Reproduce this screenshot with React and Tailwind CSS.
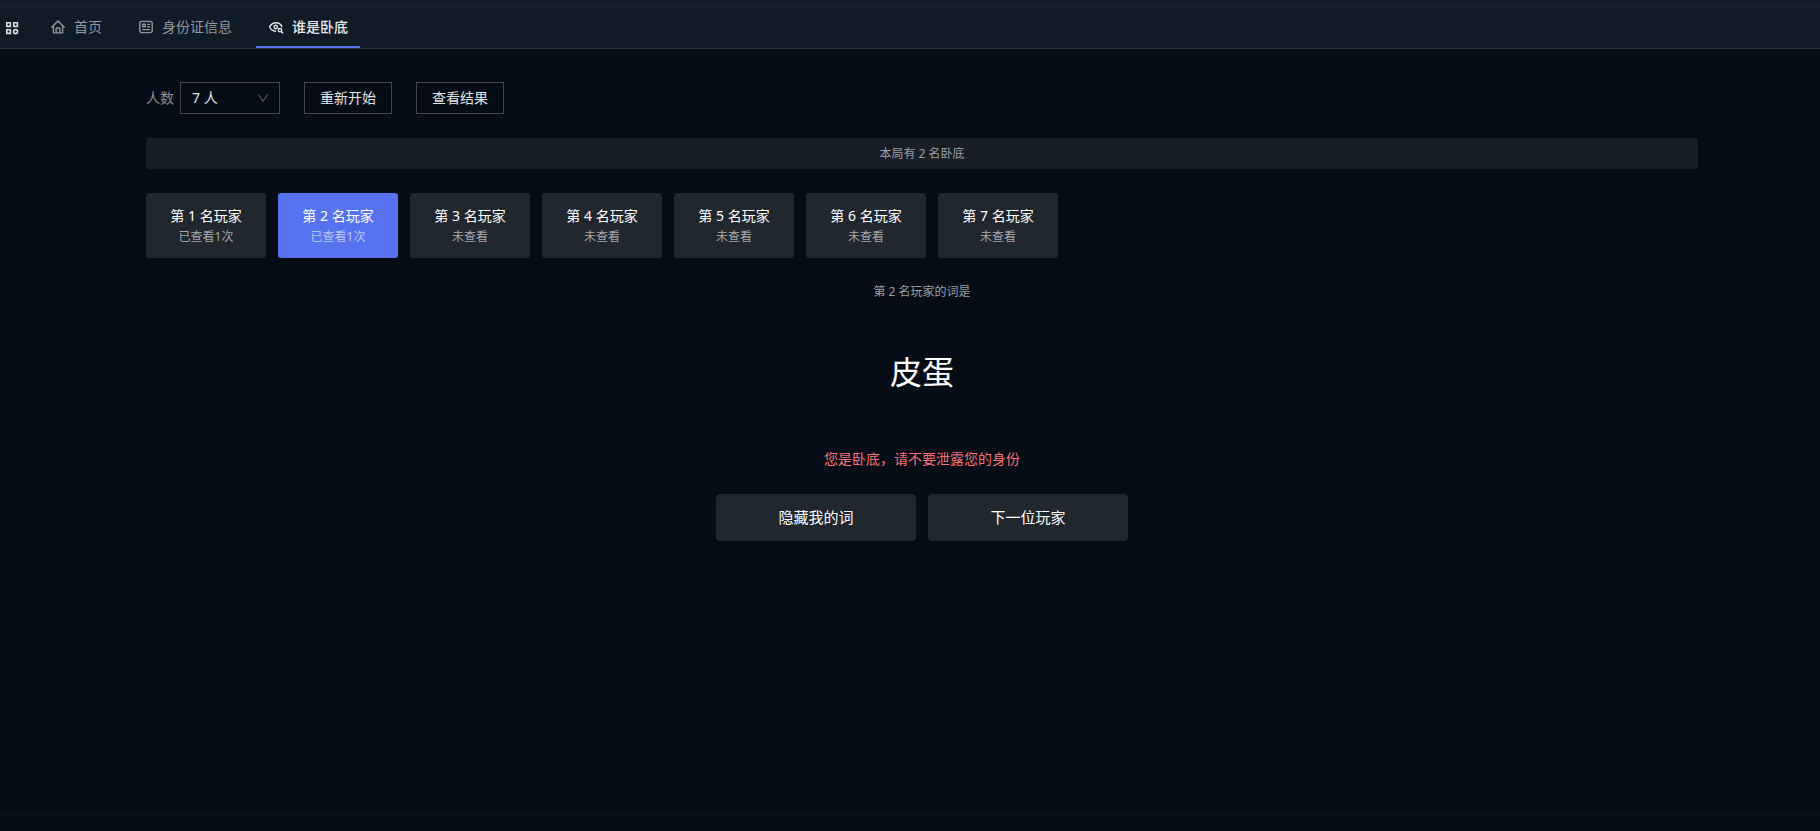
import React, { useState } from 'react';

const FONT = "font-['Noto_Sans','Noto_Sans_CJK_SC',sans-serif]";

const GridIcon = () => (
  <svg className="w-4 h-4" viewBox="0 0 16 16" fill="none" stroke="currentColor" strokeWidth="1.6">
    <path d="M2.8 2.8h3.6v3.6H2.8zM9.8 2.8h3.6v3.6H9.8zM2.8 9.8h3.6v3.6H2.8z" />
    <circle cx="11.6" cy="11.6" r="2" />
  </svg>
);

const HomeIcon = () => (
  <svg className="w-4 h-4" viewBox="0 0 16 16" fill="none" stroke="currentColor" strokeWidth="1.4" strokeLinecap="round" strokeLinejoin="round">
    <path d="M1.8 8.2L8 1.9l6.2 6.3" />
    <path d="M3.4 7v6.9h9.2V7" />
    <path d="M6.1 13.6v-3a1.9 1.9 0 0 1 3.8 0v3" />
  </svg>
);

const IdCardIcon = () => (
  <svg className="w-4 h-4" viewBox="0 0 16 16" fill="none" stroke="currentColor" strokeWidth="1.4">
    <rect x="1.8" y="2.4" width="12.4" height="11.2" rx="2" />
    <rect x="4.6" y="5.2" width="2.8" height="2.6" rx="0.6" />
    <path d="M9.2 5.4h2.8M9.2 7.8h2.8M4 10.6h8" />
  </svg>
);

const EyeSearchIcon = () => (
  <svg className="w-4 h-4" viewBox="0 0 16 16" fill="none" stroke="currentColor" strokeWidth="1.4" strokeLinecap="round">
    <path d="M7.6 12.2C4.8 12.2 2.8 10.4 1.6 8 2.8 5.6 4.8 3.8 7.8 3.8s5 1.6 6.2 3.8" />
    <circle cx="7.7" cy="8" r="1.7" />
    <circle cx="12" cy="11.2" r="1.7" />
    <path d="M13.3 12.5l1.4 1.5" />
  </svg>
);

const TABS = [
  { key: 'home', label: '首页', icon: HomeIcon },
  { key: 'idcard', label: '身份证信息', icon: IdCardIcon },
  { key: 'undercover', label: '谁是卧底', icon: EyeSearchIcon },
];

const Header = () => (
  <header className="bg-[#111b26] border-b border-[#2b323b]">
    <div className="h-2 bg-[#131d28] border-b border-[#19232d]" />
    <nav className="flex h-10 items-stretch">
      <button type="button" aria-label="菜单" className="flex items-center pl-1 pr-[18px] text-[#d9dbdd]">
        <GridIcon />
      </button>
      <div className="flex gap-3">
        {TABS.map(({ key, label, icon: Icon }) => (
          <a
            key={key}
            href={`#${key}`}
            className={`flex items-center gap-2 px-3 text-sm border-b-2 ${
              key === 'undercover' ? 'border-[#5672ee] text-[#e6e7e9] font-medium' : 'border-transparent text-[#92979d]'
            }`}
          >
            <Icon />
            {label}
          </a>
        ))}
      </div>
    </nav>
  </header>
);

const Toolbar = ({ count, onCount, onReset }) => (
  <div className="flex items-center gap-6 text-sm">
    <div className="flex items-center gap-[6px]">
      <label htmlFor="count" className="text-[#8b8f94]">人数</label>
      <div className="relative">
        <select
          id="count"
          value={count}
          onChange={(e) => onCount(Number(e.target.value))}
          className="block appearance-none w-[100px] h-8 pl-[11px] border border-[#42474d] bg-[#060d16] text-[#e3e4e6]"
        >
          {[4, 5, 6, 7, 8, 9, 10].map((n) => (
            <option key={n} value={n}>{n} 人</option>
          ))}
        </select>
        <svg className="pointer-events-none absolute right-[11px] top-[10px] w-3 h-3" viewBox="0 0 12 12" fill="none" stroke="#53585e" strokeWidth="1.1">
          <path d="M1.2 2.4L6 9.2l4.8-6.8" />
        </svg>
      </div>
    </div>
    <button type="button" onClick={onReset} className="h-8 px-[15px] border border-[#42474d] text-[#e3e4e6]">重新开始</button>
    <button type="button" className="h-8 px-[15px] border border-[#42474d] text-[#e3e4e6]">查看结果</button>
  </div>
);

const App = () => {
  const [count, setCount] = useState(7);
  const [current, setCurrent] = useState(2);
  const [views, setViews] = useState({ 1: 1, 2: 1 });
  const [hidden, setHidden] = useState(false);

  const select = (n) => {
    setCurrent(n);
    setHidden(false);
    setViews({ ...views, [n]: (views[n] || 0) + 1 });
  };

  const reset = () => {
    setViews({ 1: 1 });
    setCurrent(1);
  };

  return (
    <div className={`flex min-h-screen flex-col bg-[#060d16] text-white ${FONT}`}>
      <Header />
      <main className="flex-1 pt-[33px] pl-[146px] pr-[122px]">
        <Toolbar count={count} onCount={setCount} onReset={reset} />

        <div className="mt-6 rounded-xs bg-[#171e26] py-[6px] text-center text-xs leading-[19px] text-[#9a9ea3]">
          本局有 2 名卧底
        </div>

        <div className="mt-6 flex flex-wrap gap-3">
          {Array.from({ length: count }, (_, i) => i + 1).map((n) => (
            <button
              key={n}
              type="button"
              onClick={() => select(n)}
              className={`w-[120px] rounded-[3px] py-3 text-center ${n === current ? 'bg-[#5672ee]' : 'bg-[#21272f]'}`}
            >
              <div className="text-sm leading-[22px]">第 {n} 名玩家</div>
              <div className={`text-xs leading-[19px] ${n === current ? 'text-[#b9c4f8]' : 'text-[#a3a6aa]'}`}>
                {views[n] ? `已查看${views[n]}次` : '未查看'}
              </div>
            </button>
          ))}
        </div>

        <section className="mt-6 flex flex-col items-center">
          <p className="text-xs leading-[19px] text-[#9a9ea3]">第 {current} 名玩家的词是</p>
          <h1 className="mt-12 text-[32px] leading-[45px] font-normal">{hidden ? '＊＊' : '皮蛋'}</h1>
          <p className="mt-12 text-sm leading-[22px] py-[6px] text-[#f87074]">您是卧底，请不要泄露您的身份</p>
          <div className="mt-[18px] flex gap-3">
            <button type="button" onClick={() => setHidden(!hidden)} className="w-[200px] h-[47px] rounded-sm bg-[#21272f] text-[15px]">
              隐藏我的词
            </button>
            <button type="button" onClick={() => select((current % count) + 1)} className="w-[200px] h-[47px] rounded-sm bg-[#21272f] text-[15px]">
              下一位玩家
            </button>
          </div>
        </section>
      </main>
      <footer className="h-[18px] border-t-2 border-[#0a121b]" />
    </div>
  );
};

export default App;
